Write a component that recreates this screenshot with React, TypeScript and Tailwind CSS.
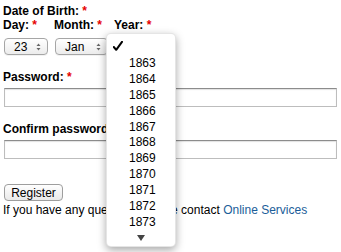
import React from "react"

const years = [1863, 1864, 1865, 1866, 1867, 1868, 1869, 1870, 1871, 1872, 1873]

function Star() {
  return <span className="text-[#e60000]"> *</span>
}

function Arrows() {
  return (
    <svg width="5" height="8" viewBox="0 0 5 8" className="shrink-0">
      <path d="M2.5 0.5 L4.5 3 L0.5 3 Z" fill="#666" />
      <path d="M0.5 5 L4.5 5 L2.5 7.5 Z" fill="#666" />
    </svg>
  )
}

function FakeSelect({ value, width }: { value: string; width: string }) {
  return (
    <div
      className={`ml-[1px] flex h-[17px] ${width} items-center justify-between rounded-[4px] border border-[#a6a6a6] bg-gradient-to-b from-white to-[#ececec] pl-[9px] pr-[6px] text-[12px] font-normal leading-none text-black shadow-[0_1px_0_rgba(0,0,0,0.05)]`}
    >
      <span>{value}</span>
      <Arrows />
    </div>
  )
}

function TextBox() {
  return (
    <div className="ml-[1px] mt-[4px] h-[19px] w-[333px] border border-[#bdbdbd] border-t-[#8c8c8c] bg-white shadow-[inset_0_1px_1px_rgba(0,0,0,0.12)]" />
  )
}

export default function App() {
  return (
    <div className="relative h-[252px] w-[341px] overflow-hidden bg-white pl-[3px] pt-[4px] font-['Liberation_Sans',Arial,sans-serif] text-[12px] leading-[13px] text-black">
      <div className="font-bold leading-[14px]">
        Date of Birth:<Star />
      </div>

      <div className="flex gap-[5px] font-bold leading-[14px]">
        <div className="flex w-[46px] flex-col">
          <div>
            Day:<Star />
          </div>
          <div className="mt-[6px]">
            <FakeSelect value="23" width="w-[44px]" />
          </div>
        </div>
        <div className="flex w-[55px] flex-col">
          <div>
            Month:<Star />
          </div>
          <div className="mt-[6px]">
            <FakeSelect value="Jan" width="w-[53px]" />
          </div>
        </div>
        <div className="flex flex-col">
          <div>
            Year:<Star />
          </div>
          <div className="mt-[6px]">
            <FakeSelect value="" width="w-[56px]" />
          </div>
        </div>
      </div>

      <div className="mt-[16px] font-bold">
        Password:<Star />
      </div>
      <TextBox />

      <div className="mt-[16px] font-bold">
        Confirm password<Star />
      </div>
      <TextBox />

      <button className="ml-[1px] mt-[25px] flex h-[17px] w-[59px] items-center justify-center rounded-[4px] border border-[#9e9e9e] bg-gradient-to-b from-white to-[#e9e9e9] text-[12px] leading-none text-black">
        Register
      </button>
      <div className="mt-[3px]">
        If you have any questions please contact{" "}
        <a className="text-[#1b5d99]">Online Services</a>
      </div>

      {/* open year popup menu */}
      <div className="absolute left-[106px] top-[33px] flex h-[214px] w-[70px] flex-col rounded-[5px] border border-black/10 bg-white pt-[5px] shadow-[0_3px_9px_rgba(0,0,0,0.35)]">
        <div className="flex h-[16px] items-center pl-[6px]">
          <svg width="10" height="11" viewBox="0 0 10 11">
            <path d="M0.8 6 L3.2 8.8 L9 0.8" fill="none" stroke="#000" strokeWidth="2" strokeLinecap="round" strokeLinejoin="round" />
          </svg>
        </div>
        {years.map((y) => (
          <div key={y} className="flex h-[16px] items-center pl-[22px] text-[12px] leading-none">
            {y}
          </div>
        ))}
        <div className="flex h-[16px] items-center justify-center">
          <svg width="8" height="6" viewBox="0 0 8 6">
            <path d="M0 0 L8 0 L4 6 Z" fill="#444" />
          </svg>
        </div>
      </div>
    </div>
  )
}
